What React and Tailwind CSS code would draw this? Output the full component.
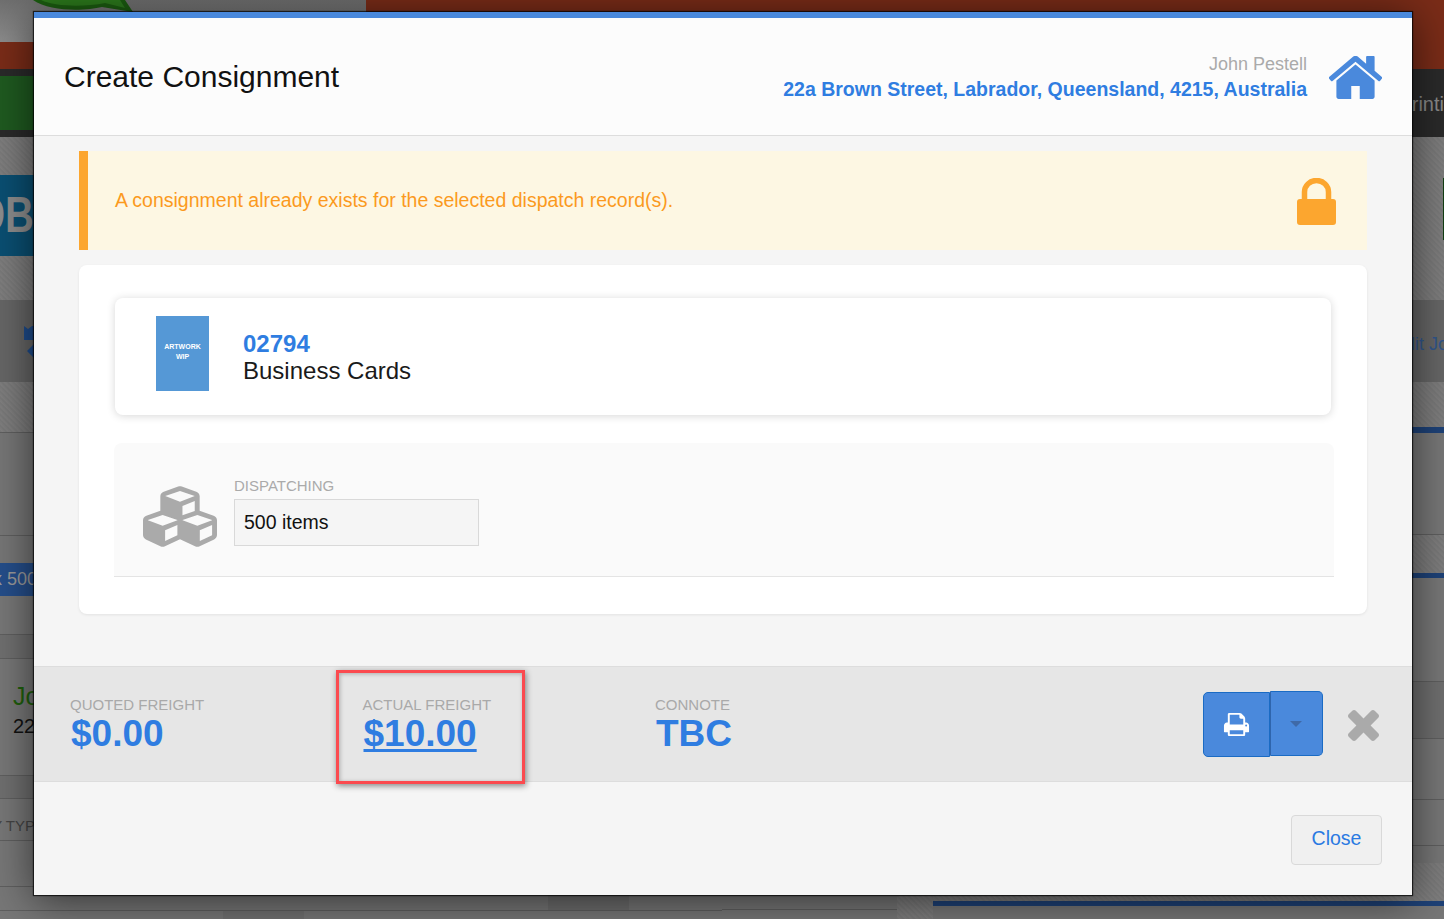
import React from "react";
import { FaCubes } from "react-icons/fa";

const tex = "bg-[#7c7c7c] bg-[repeating-linear-gradient(45deg,#797979_0px,#797979_1px,#807f7f_2px,#7b7b7b_4px)]";

function Band({ h, className = "", children }) {
  return <div className={`shrink-0 overflow-hidden border-b border-[#5f5f5f] ${className}`} style={{ height: h }}>{children}</div>;
}

function Stat({ label, value, link, w }) {
  return (
    <div className={`flex flex-col pt-[1px] ${w}`}>
      <span className="text-[15px] leading-[18px] text-[#a9a9a9]">{label}</span>
      <span className={`ml-px mt-[1px] text-[37px] leading-[38px] font-bold text-[#2f7de1] ${link ? "underline decoration-[3px] underline-offset-[3px]" : ""}`}>{value}</span>
    </div>
  );
}

export default function App() {
  return (
    <div className="relative h-[919px] w-[1444px] overflow-hidden bg-[#777] font-['Liberation_Sans',Arial,sans-serif]">
      <div className="flex h-full w-full">
        {/* dimmed page behind the dialog: left half */}
        <div className="flex w-[722px] flex-col">
          <div className="flex h-[42px] shrink-0">
            <div className="relative w-[366px] bg-[linear-gradient(#6f6f6f,#8c8c8c)]">
              <svg className="absolute left-[33px] top-0" width="100" height="12" viewBox="0 0 100 12">
                <path d="M0 0 C17 12 52 11 69 7 L100 12 L92 0 Z" fill="#1b5c10" />
                <path d="M8 0 C22 7 52 7 72 3 L92 8 L87 0 Z" fill="#2c7a1c" />
              </svg>
            </div>
            <div className="flex-1 bg-[#7a2c18]" />
          </div>
          <div className="h-[27px] shrink-0 bg-[#7a2c18]" />
          <div className="h-[7px] shrink-0 bg-[#2a2a2a]" />
          <div className="h-[54px] shrink-0 bg-[#1f5a20]" />
          <div className="h-[7px] shrink-0 bg-[#2a2a2a]" />
          <div className={`h-[163px] shrink-0 pt-[38px] ${tex}`}>
            <div className="flex h-[81px] w-[34px] items-center justify-end overflow-hidden bg-[#0a4f72] text-[50px] font-bold text-[#8d8d8d]">
              <span className="inline-block shrink-0 origin-right scale-x-[0.8] whitespace-nowrap">OB</span>
            </div>
          </div>
          <div className="flex h-[82px] shrink-0 items-start bg-[#666] pl-[24px] pt-[26px]">
            <svg width="10" height="36" viewBox="0 0 10 36"><path d="M0 0 L4 3 L8 0 H10 V14 H0 Z M10 18 V32 L3 25 Z" fill="#1e4c8c" /></svg>
          </div>
          <div className={`h-[50px] shrink-0 ${tex}`} />
          <Band h={104} className="border-t bg-[#767676]" />
          <div className="h-[27px] shrink-0 bg-[#767676]" />
          <div className="flex h-[33px] w-[34px] shrink-0 items-center justify-end overflow-hidden bg-[#254e8a] text-[18px] text-[#9a9a9a]"><span className="-mr-[3px] whitespace-nowrap">x 500</span></div>
          <Band h={39} className="bg-[#777]" />
          <Band h={24} className="bg-[#6f6f6f]" />
          <Band h={117} className="bg-[#777] pl-[13px] pt-[22px]">
            <div className="w-[21px] overflow-hidden whitespace-nowrap text-[25px] leading-[30px] text-[#1e5f0c]">John</div>
            <div className="w-[21px] overflow-hidden whitespace-nowrap text-[20px] leading-[30px] text-[#111]">22a</div>
          </Band>
          <Band h={23} className="bg-[#6f6f6f]" />
          <Band h={42} className="bg-[#777] pt-[18px]">
            <div className="flex h-[18px] w-[34px] items-center justify-end overflow-hidden whitespace-nowrap text-[15px] text-[#444]"><span className="-mr-px">Y TYP</span></div>
          </Band>
          <Band h={46} className="bg-[#777]" />
          <Band h={24} className="flex bg-[#777]">
            <div className="ml-[548px] h-full w-[81px] bg-[#6e6e6e]" />
          </Band>
          <div className="flex flex-1 bg-[#777]">
            <div className="ml-[223px] h-full w-[81px] bg-[#707070]" />
          </div>
        </div>
        {/* dimmed page behind the dialog: right half */}
        <div className="flex w-[722px] flex-col">
          <div className="h-[69px] shrink-0 bg-[#7a2c18]" />
          <div className="flex h-[68px] shrink-0 items-center justify-end overflow-hidden bg-[#2a2a2a] pt-[2px] text-[20px] text-[#8a8a8a]"><span className="whitespace-nowrap">rinti</span></div>
          <div className={`flex h-[163px] shrink-0 justify-end pt-[41px] ${tex}`}><div className="h-[62px] w-px bg-[#123f12]" /></div>
          <div className="flex h-[82px] shrink-0 items-center justify-end overflow-hidden bg-[#666] pt-[6px] text-[18px] text-[#31568c]"><span className="-mr-[4px] whitespace-nowrap">lit Jo</span></div>
          <div className={`h-[45px] shrink-0 ${tex}`} />
          <div className="h-[6px] shrink-0 bg-[#1e4278]" />
          <Band h={102} className="bg-[#777]" />
          <div className={`h-[38px] shrink-0 ${tex}`} />
          <div className="h-[5px] shrink-0 bg-[#1e4278]" />
          <Band h={104} className="bg-[#777]" />
          <Band h={57} className="bg-[#6f6f6f]" />
          <Band h={61} className="bg-[#777]" />
          <Band h={46} className="bg-[#777]" />
          <div className="flex min-h-0 flex-1">
            <div className="flex w-[175px] flex-col">
              <div className="h-[64px] shrink-0 border-b border-[#5f5f5f] bg-[#777]" />
              <div className="flex-1 bg-[#777]" />
            </div>
            <div className={`w-[36px] ${tex}`} />
            <div className="flex flex-1 flex-col">
              <div className="h-[17px] shrink-0 bg-[#777]" />
              <div className={`h-[38px] shrink-0 ${tex}`} />
              <div className="h-[5px] shrink-0 bg-[#1e4278]" />
              <div className="flex-1 bg-[#777]" />
            </div>
          </div>
        </div>
      </div>

      {/* dialog */}
      <div className="absolute left-[34px] top-[12px] flex h-[883px] w-[1378px] flex-col border-t-[6px] border-[#4a89dc] bg-[#f5f5f5] shadow-[0_0_1px_1px_rgba(0,0,0,0.7),0_5px_40px_rgba(0,0,0,0.6)]">
        <header className="flex h-[118px] shrink-0 items-center justify-between border-b border-[#dddddd] bg-[#fcfcfc] pl-[30px] pr-[30px]">
          <h1 className="text-[30px] font-normal leading-none text-[#111]">Create Consignment</h1>
          <div className="flex items-center gap-[22px]">
            <div className="flex flex-col items-end">
              <span className="text-[18px] leading-[24px] text-[#aaaaaa]">John Pestell</span>
              <span className="text-[19.5px] font-bold leading-[26px] text-[#2f7de1]">22a Brown Street, Labrador, Queensland, 4215, Australia</span>
            </div>
            <svg width="53" height="43" viewBox="97 256 1598 1280" preserveAspectRatio="none" className="mt-px text-[#4a89dc]" fill="currentColor">
              <path d="M1472 992v480q0 26-19 45t-45 19h-384v-384h-256v384h-384q-26 0-45-19t-19-45v-480q0-1 .5-3t.5-3l575-474 575 474q1 2 1 6zm223-69l-62 74q-8 9-21 11h-3q-13 0-21-7l-692-577-692 577q-12 8-24 7-13-2-21-11l-62-74q-8-10-7-23.5t11-21.5l719-599q32-26 76-26t76 26l244 204v-195q0-14 9-23t23-9h192q14 0 23 9t9 23v408l219 182q10 8 11 21.5t-7 23.5z" />
            </svg>
          </div>
        </header>

        <div className="mx-[45px] mt-[15px] flex h-[99px] shrink-0 items-center justify-between border-l-[9px] border-[#fca62f] bg-[#fdf7e3] pl-[27px] pr-[31px]">
          <span className="text-[19.5px] text-[#fb9a1e]">A consignment already exists for the selected dispatch record(s).</span>
          <svg width="39" height="47" viewBox="0 0 39 47" className="mt-[2px] text-[#fca62f]" fill="currentColor">
            <rect x="0" y="21" width="39" height="26" rx="3" />
            <path d="M7.5 22 V14 A12 11.5 0 0 1 31.5 14 V22" fill="none" stroke="currentColor" strokeWidth="5.5" />
          </svg>
        </div>

        <div className="mx-[45px] mt-[15px] h-[349px] shrink-0 rounded-lg bg-white pl-[36px] pr-[36px] pt-[33px] shadow-[0_1px_3px_rgba(0,0,0,0.08)]">
          <div className="flex h-[117px] items-center rounded-lg bg-white pl-[41px] shadow-[0_1px_8px_rgba(0,0,0,0.16)]">
            <div className="-mt-[6px] flex h-[75px] w-[53px] shrink-0 flex-col items-center justify-center bg-[#5598d6] pb-[3px] text-[7px] font-bold leading-[10px] text-white">
              <span>ARTWORK</span>
              <span>WIP</span>
            </div>
            <div className="ml-[34px] mt-[2px] flex flex-col">
              <span className="text-[24px] font-bold leading-[26px] text-[#2f7de1]">02794</span>
              <span className="text-[24px] leading-[28px] text-[#1a1a1a]">Business Cards</span>
            </div>
          </div>
          <div className="-ml-px -mr-[3px] mt-[28px] flex h-[134px] items-center rounded-t-lg border-b border-[#e4e4e4] bg-[#fafafa] pl-[29px]">
            <FaCubes className="mt-[14px] h-[69px] w-[74px] text-[#aaaaaa]" preserveAspectRatio="none" />
            <div className="ml-[17px] mt-[3px] flex flex-col">
              <span className="text-[15px] leading-[18px] text-[#aaaaaa]">DISPATCHING</span>
              <div className="mt-[4px] flex h-[47px] w-[245px] items-center border border-[#d9d9d9] bg-[#f5f5f5] pl-[9px] pt-[1px] text-[19.5px] text-[#111]">500 items</div>
            </div>
          </div>
        </div>

        <div className="mt-[52px] flex h-[116px] shrink-0 items-center border-y border-[#dddddd] bg-[#e6e6e6] pl-[36px] pr-[28px]">
          <Stat label="QUOTED FREIGHT" value="$0.00" w="w-[292.5px]" />
          <Stat label="ACTUAL FREIGHT" value="$10.00" link w="w-[292.5px]" />
          <Stat label="CONNOTE" value="TBC" w="w-[300px]" />
          <div className="ml-auto flex items-center">
            <button className="flex h-[65px] w-[67px] items-center justify-center rounded-l-[5px] border border-[#1a6bc4] bg-[#4a89dc] text-white">
              <svg width="27" height="27" viewBox="0 0 1792 1792" fill="currentColor">
                <path d="M448 1536h896v-256h-896v256zm0-640h896v-384h-160q-40 0-68-28t-28-68v-160h-640v640zm1152 64q0-26-19-45t-45-19-45 19-19 45 19 45 45 19 45-19 19-45zm128 0v416q0 13-9.5 22.5t-22.5 9.5h-224v160q0 40-28 68t-68 28h-960q-40 0-68-28t-28-68v-160h-224q-13 0-22.5-9.5t-9.5-22.5v-416q0-79 56.5-135.5t135.5-56.5h64v-544q0-40 28-68t68-28h672q40 0 88 20t76 48l152 152q28 28 48 76t20 88v256h64q79 0 135.5 56.5t56.5 135.5z" />
              </svg>
            </button>
            <button className="-mt-[2px] flex h-[65px] w-[53px] items-center justify-center rounded-r-[5px] border border-[#1a6bc4] border-l-[#2f65ad] bg-[#4a89dc]">
              <svg width="12" height="6" viewBox="0 0 12 6" className="-ml-[2px] mt-[2px] text-[#3f6aa8]" fill="currentColor"><polygon points="0,0 12,0 6,6" /></svg>
            </button>
            <svg width="31" height="31" viewBox="302 366 1188 1188" className="ml-[25px] mr-[5px] mt-[3px] text-[#aaaaaa]" fill="currentColor">
              <path d="M1490 1322q0 40-28 68l-136 136q-28 28-68 28t-68-28l-294-294-294 294q-28 28-68 28t-68-28l-136-136q-28-28-28-68t28-68l294-294-294-294q-28-28-28-68t28-68l136-136q28-28 68-28t68 28l294 294 294-294q28-28 68-28t68 28l136 136q28 28 28 68t-28 68l-294 294 294 294q28 28 28 68z" />
            </svg>
          </div>
        </div>

        <div className="flex flex-1 items-start justify-end pr-[30px] pt-[33px]">
          <button className="h-[50px] w-[91px] rounded-[4px] border border-[#d9d9d9] bg-[#f0f0f0] pb-[3px] text-[19.5px] text-[#2a7ae2]">Close</button>
        </div>

        {/* annotation box */}
        <div className="absolute left-[302px] top-[652px] h-[114px] w-[189px] border-[3px] border-[#fb4a4f] shadow-[1px_2px_6px_rgba(0,0,0,0.45),inset_1px_1px_4px_rgba(0,0,0,0.25)]" />
      </div>
    </div>
  );
}
